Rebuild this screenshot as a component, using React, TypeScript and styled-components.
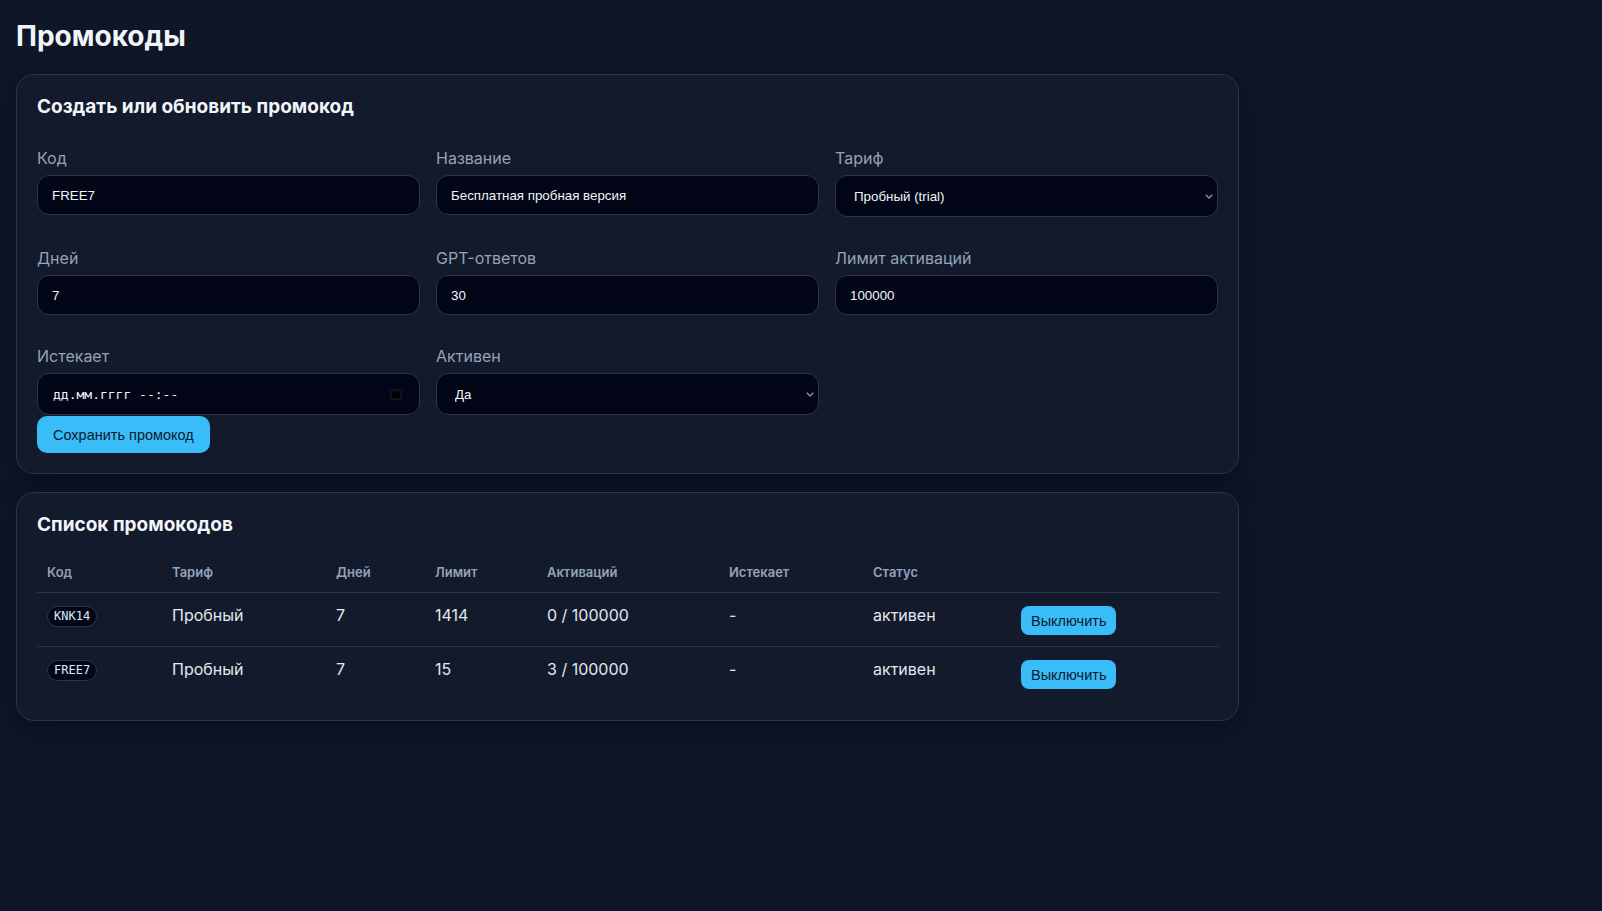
import React from "react";
import styled, { createGlobalStyle } from "styled-components";

const GlobalStyle = createGlobalStyle`
  html, body {
    margin: 0;
    background: #0e1628;
  }
  body {
    font-family: Inter, "Noto Sans", sans-serif;
    color: #e2e8f0;
  }
  * {
    box-sizing: border-box;
  }
`;

const Page = styled.div`
  min-height: 100vh;
  padding: 16px;
  background: #0e1628;
`;

const Title = styled.h1`
  margin: 3px 0 21px;
  font-size: 28px;
  line-height: 34px;
  font-weight: 700;
  color: #f1f5f9;
`;

const Stack = styled.div`
  max-width: 1223px;
  display: flex;
  flex-direction: column;
  gap: 18px;
`;

const Card = styled.section`
  background: #121a2b;
  border: 1px solid #2b3648;
  border-radius: 18px;
  padding: 20px;
  box-shadow: 0 8px 30px rgba(2, 6, 23, 0.35);
`;

const CardTitle = styled.h2`
  margin: 0 0 16px;
  font-size: 19px;
  line-height: 23px;
  font-weight: 700;
  color: #f1f5f9;
`;

const FormGrid = styled.div`
  display: grid;
  grid-template-columns: repeat(3, 1fr);
  column-gap: 16px;
  row-gap: 32px;
  padding-top: 15px;
`;

const Field = styled.label`
  display: flex;
  flex-direction: column;
  gap: 7px;
`;

const FieldLabel = styled.span`
  font-size: 16px;
  line-height: 19px;
  color: #94a3b8;
`;

const controlFont = `
  font-family: "Liberation Sans", Arial, sans-serif;
  font-size: 13.33px;
  color: #f1f5f9;
`;

const TextInput = styled.input`
  ${controlFont}
  height: 40px;
  width: 100%;
  padding: 0 14px;
  background: #020617;
  border: 1px solid #2b3648;
  border-radius: 12px;
  outline: none;
`;

const ControlBox = styled.div<{ $padRight: number }>`
  height: 42px;
  display: flex;
  align-items: center;
  background: #020617;
  border: 1px solid #2b3648;
  border-radius: 12px;
  padding: 0 ${(p) => p.$padRight}px 0 14px;
`;

const Select = styled.select`
  ${controlFont}
  flex: 1;
  height: 100%;
  appearance: none;
  background: transparent;
  border: none;
  outline: none;
  padding: 0 0 0 4px;

  option {
    background: #020617;
    color: #f1f5f9;
  }
`;

const DateText = styled.span`
  flex: 1;
  padding-left: 1px;
  font-family: "DejaVu Sans Mono", "Liberation Mono", monospace;
  font-size: 13px;
  color: #f1f5f9;
`;

const SaveButton = styled.button`
  align-self: flex-start;
  margin-top: 1px;
  height: 37px;
  padding: 0 16px;
  background: #38bdf8;
  border: none;
  border-radius: 10px;
  font-family: "Liberation Sans", Arial, sans-serif;
  font-size: 14.5px;
  color: #0f172a;
  cursor: pointer;
`;

const FormBody = styled.div`
  display: flex;
  flex-direction: column;
`;

const Table = styled.table`
  width: 100%;
  border-collapse: collapse;
  table-layout: fixed;
`;

const Th = styled.th`
  text-align: left;
  padding: 12px 10px;
  font-size: 13px;
  line-height: 16px;
  font-weight: 600;
  color: #94a3b8;
  border-bottom: 1px solid #2b3648;
`;

const Row = styled.tr`
  & + & td {
    border-top: 1px solid #2b3648;
  }
`;

const Td = styled.td`
  padding: 13px 10px 11px;
  vertical-align: top;
  font-size: 16px;
  line-height: 19px;
  color: #e2e8f0;
`;

const CodeBadge = styled.code`
  display: inline-block;
  vertical-align: top;
  padding: 2px 6px;
  font-family: "DejaVu Sans Mono", "Liberation Mono", monospace;
  font-size: 12px;
  line-height: 15px;
  color: #dbeafe;
  background: #020617;
  border: 1px solid #2b3648;
  border-radius: 999px;
`;

const SmallButton = styled.button`
  display: inline-block;
  vertical-align: top;
  height: 29px;
  padding: 0 10px;
  background: #38bdf8;
  border: none;
  border-radius: 8px;
  font-family: "Liberation Sans", Arial, sans-serif;
  font-size: 14.5px;
  color: #0f172a;
  cursor: pointer;
`;

const Chevron = () => (
  <svg width="8" height="5" viewBox="0 0 8 5" style={{ pointerEvents: "none" }}>
    <path d="M0.8 0.8 L4 4 L7.2 0.8" fill="none" stroke="#8a93a3" strokeWidth="1.4" />
  </svg>
);

const CalendarIcon = () => (
  <svg width="12" height="12" viewBox="0 0 12 12">
    <rect x="1" y="2" width="10" height="9" rx="1" fill="#000" stroke="#1c2230" strokeWidth="1" />
    <rect x="1.5" y="2.5" width="9" height="2" fill="#0a0d14" />
  </svg>
);

const columns = [
  { title: "Код", width: 125 },
  { title: "Тариф", width: 164 },
  { title: "Дней", width: 99 },
  { title: "Лимит", width: 112 },
  { title: "Активаций", width: 182 },
  { title: "Истекает", width: 144 },
  { title: "Статус", width: 148 },
  { title: "", width: 208 },
];

const promos = [
  { code: "KNK14", plan: "Пробный", days: 7, limit: 1414, used: 0, total: 100000, expires: "-", status: "активен" },
  { code: "FREE7", plan: "Пробный", days: 7, limit: 15, used: 3, total: 100000, expires: "-", status: "активен" },
];

function PromoForm() {
  return (
    <Card>
      <CardTitle>Создать или обновить промокод</CardTitle>
      <FormBody>
        <FormGrid>
          <Field>
            <FieldLabel>Код</FieldLabel>
            <TextInput defaultValue="FREE7" />
          </Field>
          <Field>
            <FieldLabel>Название</FieldLabel>
            <TextInput defaultValue="Бесплатная пробная версия" />
          </Field>
          <Field>
            <FieldLabel>Тариф</FieldLabel>
            <ControlBox $padRight={4}>
              <Select defaultValue="trial">
                <option value="trial">Пробный (trial)</option>
                <option value="basic">Базовый</option>
                <option value="pro">Про</option>
              </Select>
              <Chevron />
            </ControlBox>
          </Field>
          <Field>
            <FieldLabel>Дней</FieldLabel>
            <TextInput defaultValue="7" />
          </Field>
          <Field>
            <FieldLabel>GPT-ответов</FieldLabel>
            <TextInput defaultValue="30" />
          </Field>
          <Field>
            <FieldLabel>Лимит активаций</FieldLabel>
            <TextInput defaultValue="100000" />
          </Field>
          <Field>
            <FieldLabel>Истекает</FieldLabel>
            <ControlBox $padRight={17}>
              <DateText>дд.мм.гггг --:--</DateText>
              <CalendarIcon />
            </ControlBox>
          </Field>
          <Field>
            <FieldLabel>Активен</FieldLabel>
            <ControlBox $padRight={4}>
              <Select defaultValue="yes">
                <option value="yes">Да</option>
                <option value="no">Нет</option>
              </Select>
              <Chevron />
            </ControlBox>
          </Field>
        </FormGrid>
        <SaveButton>Сохранить промокод</SaveButton>
      </FormBody>
    </Card>
  );
}

function PromoList() {
  return (
    <Card>
      <CardTitle>Список промокодов</CardTitle>
      <Table>
        <colgroup>
          {columns.map((c, i) => (
            <col key={i} style={{ width: c.width }} />
          ))}
        </colgroup>
        <thead>
          <tr>
            {columns.map((c, i) => (
              <Th key={i}>{c.title}</Th>
            ))}
          </tr>
        </thead>
        <tbody>
          {promos.map((p) => (
            <Row key={p.code}>
              <Td>
                <CodeBadge>{p.code}</CodeBadge>
              </Td>
              <Td>{p.plan}</Td>
              <Td>{p.days}</Td>
              <Td>{p.limit}</Td>
              <Td>
                {p.used} / {p.total}
              </Td>
              <Td>{p.expires}</Td>
              <Td>{p.status}</Td>
              <Td>
                <SmallButton>Выключить</SmallButton>
              </Td>
            </Row>
          ))}
        </tbody>
      </Table>
    </Card>
  );
}

export default function App() {
  return (
    <>
      <GlobalStyle />
      <Page>
        <Title>Промокоды</Title>
        <Stack>
          <PromoForm />
          <PromoList />
        </Stack>
      </Page>
    </>
  );
}
